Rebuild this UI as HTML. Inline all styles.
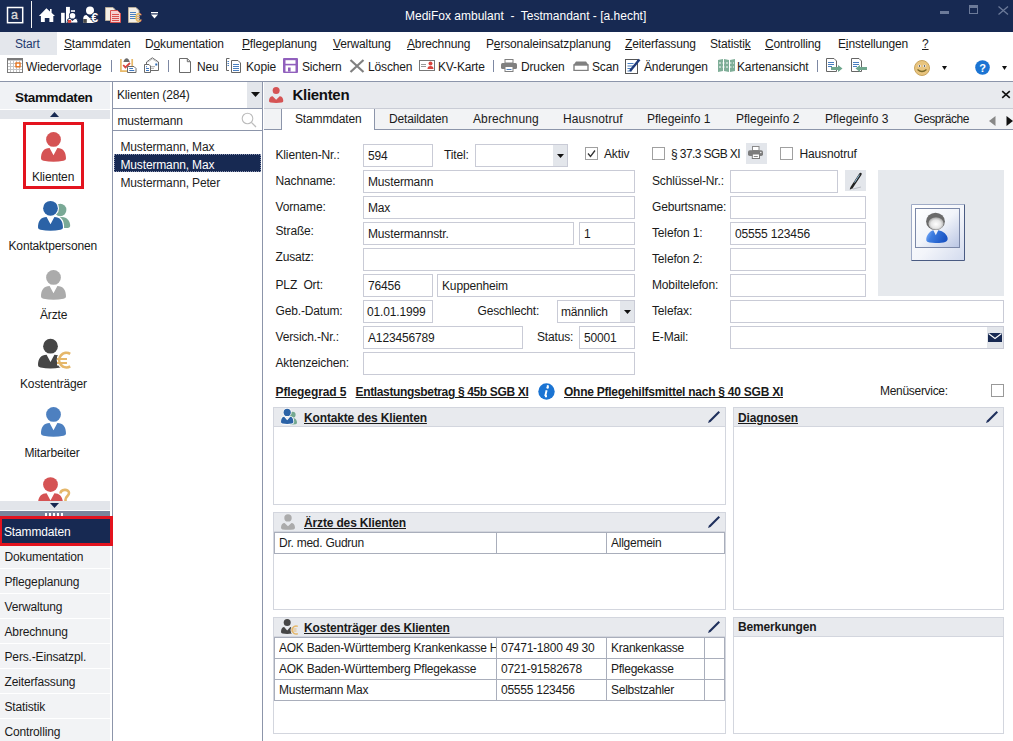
<!DOCTYPE html><html><head><meta charset="utf-8"><style>
html,body{margin:0;padding:0;}
body{width:1013px;height:741px;position:relative;overflow:hidden;background:#fff;font-family:"Liberation Sans",sans-serif;color:#1a1a1a;}
.t{position:absolute;white-space:pre;letter-spacing:-0.15px;}
.r{position:absolute;}
u{text-decoration:underline;text-underline-offset:1px;}
</style></head><body>
<div class="r" style="left:0px;top:0px;width:1013px;height:32px;background:#172952;"></div><svg class="r" style="left:6px;top:6px" width="18" height="18" viewBox="0 0 18 18"><rect x="1.5" y="1.5" width="15.2" height="15.2" fill="none" stroke="#fff" stroke-width="1.5"/><text x="5" y="12.7" font-size="12.5" font-family="Liberation Sans" fill="#dcdcdc" stroke="#dcdcdc" stroke-width="0.35">a</text></svg><div class="r" style="left:31px;top:1px;width:1.4px;height:27px;background:#f4f4f4;"></div><svg class="r" style="left:38px;top:7px" width="18" height="16" viewBox="0 0 18 16"><path d="M8.4 1.2 L12 4.4 V2 H13.6 V5.8 L17 9 H15.3 V15 H11.4 V11 H6.8 V15 H2.9 V9 H0.9 Z" fill="#fff"/></svg><svg class="r" style="left:60px;top:6px" width="18" height="17" viewBox="0 0 18 17"><rect x="1.1" y="6.8" width="3.6" height="10.1" fill="#fff"/><rect x="6" y="0.9" width="3.9" height="16" fill="#fff"/><rect x="10.9" y="4.2" width="4.1" height="1.6" fill="#fff"/><circle cx="12.5" cy="9.7" r="3.6" fill="#172952"/><circle cx="12.5" cy="9.7" r="2.8" fill="#fff"/><path d="M7.2 17 V15.5 Q7.2 12.3 10 12.3 L12.5 14.5 L15 12.3 Q17.8 12.3 17.8 15.5 V17 Z" fill="#fff" stroke="#172952" stroke-width="0.9"/><rect x="7.9" y="14" width="3.3" height="2.9" fill="#d9453e"/></svg><svg class="r" style="left:82px;top:6px" width="18" height="17" viewBox="0 0 18 17"><circle cx="8" cy="4.5" r="4" fill="#fff"/><path d="M1.2 17 V13 Q1.2 9.3 4.5 9.1 L8 12.3 L11.5 9.1 Q13 9.3 13.5 10.5 V17 Z" fill="#fff"/><rect x="1.2" y="13" width="3.6" height="3.9" fill="#4a4a4a"/><text x="9.3" y="16.3" font-size="12.5" font-weight="bold" font-family="Liberation Sans" fill="#fff" stroke="#172952" stroke-width="1.6" paint-order="stroke">€</text></svg><svg class="r" style="left:105px;top:7px" width="16" height="16" viewBox="0 0 16 16"><path d="M0.5 0.5 H8 L10 2.5 V13.5 H0.5 Z" fill="#f4efe6" stroke="#b9ad9a"/><path d="M5.5 3.5 H12.5 L15.5 6.5 V15.5 H5.5 Z" fill="#f6d0d0" stroke="#d9504e"/><rect x="7" y="7" width="7" height="1" fill="#d9504e"/><rect x="7" y="9" width="7" height="1" fill="#d9504e"/><rect x="7" y="11" width="7" height="1" fill="#d9504e"/><rect x="7" y="13" width="7" height="1" fill="#d9504e"/></svg><svg class="r" style="left:128px;top:7px" width="15" height="16" viewBox="0 0 15 16"><path d="M0.5 0.5 H8 L11 3.5 V15.5 H0.5 Z" fill="#f4efe6" stroke="#b9ad9a"/><rect x="2" y="5" width="6" height="1" fill="#4a7fc0"/><rect x="2" y="7" width="6" height="1" fill="#4a7fc0"/><rect x="2" y="9" width="6" height="1" fill="#4a7fc0"/><rect x="2" y="11" width="6" height="1" fill="#4a7fc0"/><text x="7" y="15" font-size="12" font-family="Liberation Sans" font-weight="bold" fill="#e1b56a">€</text></svg><svg class="r" style="left:151px;top:12px" width="7" height="7" viewBox="0 0 7 7"><rect x="0" y="0" width="7" height="1.3" fill="#fff"/><path d="M0 2.5 H7 L3.5 6.5 Z" fill="#fff"/></svg><div class="t" style="left:405px;top:9.34px;font-size:12px;line-height:14px;color:#fff;letter-spacing:0px;">MediFox ambulant  -  Testmandant - [a.hecht]</div><div class="r" style="left:940px;top:11px;width:9px;height:3px;background:#6c7a99;"></div><div class="r" style="left:969px;top:5px;width:9px;height:9px;border:1px solid #6c7a99;box-sizing:border-box;border-top-width:3px;"></div><svg class="r" style="left:998px;top:6px" width="11" height="9" viewBox="0 0 11 9"><path d="M0.5 0.5 L10 8.5 M10 0.5 L0.5 8.5" stroke="#6c7a99" stroke-width="1.3"/></svg><div class="r" style="left:0px;top:32px;width:57px;height:23px;background:#e4e7ec;"></div><div class="t" style="left:15px;top:36.84px;font-size:12px;line-height:14px;color:#1f3a6e;">Start</div><div class="t" style="left:64px;top:36.84px;font-size:12px;line-height:14px;"><u>S</u>tammdaten</div><div class="t" style="left:145px;top:36.84px;font-size:12px;line-height:14px;">D<u>o</u>kumentation</div><div class="t" style="left:242px;top:36.84px;font-size:12px;line-height:14px;"><u>P</u>flegeplanung</div><div class="t" style="left:333px;top:36.84px;font-size:12px;line-height:14px;"><u>V</u>erwaltung</div><div class="t" style="left:407px;top:36.84px;font-size:12px;line-height:14px;"><u>A</u>brechnung</div><div class="t" style="left:486px;top:36.84px;font-size:12px;line-height:14px;">P<u>e</u>rsonaleinsatzplanung</div><div class="t" style="left:625px;top:36.84px;font-size:12px;line-height:14px;"><u>Z</u>eiterfassung</div><div class="t" style="left:710px;top:36.84px;font-size:12px;line-height:14px;">Statisti<u>k</u></div><div class="t" style="left:765px;top:36.84px;font-size:12px;line-height:14px;"><u>C</u>ontrolling</div><div class="t" style="left:838px;top:36.84px;font-size:12px;line-height:14px;">E<u>i</u>nstellungen</div><div class="t" style="left:922px;top:36.84px;font-size:12px;line-height:14px;"><u>?</u></div><svg class="r" style="left:7px;top:58px" width="16" height="15" viewBox="0 0 16 15"><rect x="0.5" y="0.5" width="15" height="14" fill="#fff" stroke="#7a7a7a"/><rect x="0" y="0" width="16" height="2.4" fill="#7a7a7a"/><path d="M3.5 2.4 V14 M6.5 2.4 V14 M9.5 2.4 V14 M12.5 2.4 V14 M1 5.5 H15 M1 8.5 H15 M1 11.5 H15" stroke="#c4c4c4" stroke-width="1"/><rect x="9" y="5" width="4" height="3.8" fill="#fff" stroke="#e8731a" stroke-width="1.4"/></svg><div class="t" style="left:26px;top:59.84px;font-size:12px;line-height:14px;">Wiedervorlage</div><div class="r" style="left:111px;top:60px;width:1px;height:12px;background:#7d88a3;"></div><svg class="r" style="left:120px;top:57px" width="17" height="16" viewBox="0 0 17 16"><path d="M0.9 2 V14.1 H12.2 V2" fill="none" stroke="#e8b96a" stroke-width="1.7"/><path d="M3.3 5 L4.6 2.6 Q6.6 0 8.6 2.6 L9.9 5 Z" fill="#6b6b6b"/><path d="M3.2 8 L5.4 10.4 L10 6" fill="none" stroke="#d9453e" stroke-width="1.8"/><path d="M7.5 9.5 H14 L16 11.5 V15.5 H7.5 Z" fill="#fff" stroke="#6b6b6b"/><rect x="9.3" y="11" width="3.7" height="1" fill="#3f78c0"/><rect x="9.3" y="13" width="5" height="1" fill="#3f78c0"/></svg><svg class="r" style="left:144px;top:57px" width="16" height="16" viewBox="0 0 16 16"><path d="M2.5 5 L8.3 0.8 L14.5 5 V13.5 H2.5 Z" fill="#fff" stroke="#6b6b6b"/><path d="M3.5 5.3 L8.3 2 L13.5 5.3" fill="none" stroke="#c8c8c8"/><rect x="11.3" y="6.5" width="2" height="2" fill="#2f6cb5"/><path d="M7 9.6 H11 M7 11.3 H10" stroke="#b0b0b0"/><path d="M0.5 7.5 H5 L6.5 9 V15.5 H0.5 Z" fill="#fff" stroke="#6b6b6b"/><rect x="2" y="9.2" width="1" height="1" fill="#3f78c0"/><rect x="2" y="11" width="3" height="1" fill="#3f78c0"/><rect x="2" y="13" width="3" height="1" fill="#3f78c0"/></svg><div class="r" style="left:168px;top:60px;width:1px;height:12px;background:#7d88a3;"></div><svg class="r" style="left:179px;top:57px" width="12" height="16" viewBox="0 0 12 16"><path d="M0.5 1.5 H8.3 L11.5 4.7 V15.5 H0.5 Z" fill="#fff" stroke="#6b6b6b" stroke-linejoin="miter"/><path d="M8.3 1.5 V4.7 H11.5" fill="none" stroke="#6b6b6b"/></svg><div class="t" style="left:197px;top:59.84px;font-size:12px;line-height:14px;">Neu</div><svg class="r" style="left:226px;top:58px" width="16" height="15" viewBox="0 0 16 15"><path d="M3.5 0.5 H0.5 V12.5 H3" fill="none" stroke="#666"/><rect x="1.5" y="3" width="1.5" height="1" fill="#4a7fc0"/><rect x="1.5" y="5" width="1.5" height="1" fill="#4a7fc0"/><rect x="1.5" y="7" width="1.5" height="1" fill="#4a7fc0"/><path d="M5.5 2.5 H12 L14.5 5 V14.5 H5.5 Z" fill="#fff" stroke="#666"/><rect x="7" y="6" width="6" height="1" fill="#4a7fc0"/><rect x="7" y="8" width="6" height="1" fill="#4a7fc0"/><rect x="7" y="10" width="6" height="1" fill="#4a7fc0"/><rect x="7" y="12" width="6" height="1" fill="#4a7fc0"/></svg><div class="t" style="left:246px;top:59.84px;font-size:12px;line-height:14px;">Kopie</div><svg class="r" style="left:283px;top:58px" width="15" height="15" viewBox="0 0 15 15"><rect x="0" y="0" width="15" height="15" rx="1" fill="#9160bd"/><rect x="2.5" y="2.2" width="10" height="3.6" fill="#fff"/><rect x="2.5" y="7.4" width="10" height="6.2" fill="#fff"/><rect x="5" y="9.5" width="2.6" height="4.1" fill="#9160bd"/></svg><div class="t" style="left:302px;top:59.84px;font-size:12px;line-height:14px;">Sichern</div><svg class="r" style="left:349px;top:59px" width="16" height="14" viewBox="0 0 16 14"><path d="M1.5 1 L14.5 13 M14.5 1 L1.5 13" stroke="#808080" stroke-width="2.2"/></svg><div class="t" style="left:368px;top:59.84px;font-size:12px;line-height:14px;">Löschen</div><svg class="r" style="left:419px;top:60px" width="16" height="11" viewBox="0 0 16 11"><rect x="0.5" y="0.5" width="15" height="10" fill="#fff" stroke="#777"/><rect x="2" y="4" width="5" height="1" fill="#999"/><rect x="2" y="6" width="5" height="1" fill="#999"/><circle cx="11.5" cy="3.5" r="2" fill="#d9453e"/><path d="M8.5 9 Q8.5 6 11.5 6 Q14.5 6 14.5 9 Z" fill="#d9453e"/></svg><div class="t" style="left:438px;top:59.84px;font-size:12px;line-height:14px;">KV-Karte</div><div class="r" style="left:493px;top:60px;width:1px;height:12px;background:#7d88a3;"></div><svg class="r" style="left:501px;top:59px" width="16" height="13" viewBox="0 0 16 13"><rect x="4" y="0.5" width="8" height="3.5" fill="none" stroke="#808080"/><rect x="0" y="4" width="16" height="6" rx="1.5" fill="#808080"/><rect x="4" y="7.5" width="8" height="5" fill="#fff" stroke="#808080"/><rect x="5.5" y="10" width="5" height="1" fill="#4a7fc0"/></svg><div class="t" style="left:521px;top:59.84px;font-size:12px;line-height:14px;">Drucken</div><svg class="r" style="left:573px;top:61px" width="16" height="10" viewBox="0 0 16 10"><path d="M3 0.5 H13 L15.5 4 H0.5 Z" fill="#808080"/><rect x="1" y="4" width="14" height="5.5" fill="none" stroke="#808080" stroke-width="1.4"/></svg><div class="t" style="left:592px;top:59.84px;font-size:12px;line-height:14px;">Scan</div><svg class="r" style="left:625px;top:58px" width="16" height="16" viewBox="0 0 16 16"><rect x="0.5" y="1.5" width="12" height="14" fill="#fff" stroke="#555"/><rect x="2.5" y="5" width="6" height="1" fill="#4a7fc0"/><rect x="2.5" y="7.5" width="6" height="1" fill="#4a7fc0"/><rect x="2.5" y="10" width="5" height="1" fill="#4a7fc0"/><rect x="2.5" y="12.5" width="4" height="1" fill="#4a7fc0"/><path d="M5 13 L14.5 1.5" stroke="#1f3a7a" stroke-width="2.4"/></svg><div class="t" style="left:644px;top:59.84px;font-size:12px;line-height:14px;">Änderungen</div><svg class="r" style="left:718px;top:59px" width="17" height="13" viewBox="0 0 17 13"><path d="M0 1 L5 0 L5 12 L0 13 Z M6 0 L11 1 L11 13 L6 12 Z M12 1 L17 0 L17 12 L12 13 Z" fill="#7fae98"/><path d="M1 4 H16 M1 8 H16" stroke="#fff" stroke-width="1" stroke-dasharray="2 1.5"/></svg><div class="t" style="left:737px;top:59.84px;font-size:12px;line-height:14px;">Kartenansicht</div><div class="r" style="left:817px;top:60px;width:1px;height:12px;background:#7d88a3;"></div><svg class="r" style="left:826px;top:58px" width="17" height="14" viewBox="0 0 17 14"><path d="M0.5 0.5 H8 L10.5 3 V13.5 H0.5 Z" fill="#fff" stroke="#666"/><rect x="2" y="4" width="6" height="1" fill="#4a7fc0"/><rect x="2" y="6" width="6" height="1" fill="#4a7fc0"/><rect x="2" y="8" width="4" height="1" fill="#4a7fc0"/><path d="M5 9 H12 V7 L16.5 10.5 L12 14 V12 H5 Z" fill="#6fa78e"/></svg><svg class="r" style="left:851px;top:58px" width="16" height="14" viewBox="0 0 16 14"><path d="M0.5 0.5 H8 L10.5 3 V13.5 H0.5 Z" fill="#fff" stroke="#666"/><rect x="2" y="4" width="6" height="1" fill="#4a7fc0"/><rect x="2" y="6" width="6" height="1" fill="#4a7fc0"/><rect x="2" y="8" width="4" height="1" fill="#4a7fc0"/><path d="M16 9 H9 V7 L4.5 10.5 L9 14 V12 H16 Z" fill="#6fa78e"/></svg><svg class="r" style="left:914px;top:60px" width="16" height="16" viewBox="0 0 16 16"><circle cx="8" cy="8" r="7.5" fill="#e8c47e" stroke="#c9a45e"/><ellipse cx="5.5" cy="6" rx="1.6" ry="1.3" fill="#fff"/><ellipse cx="10.5" cy="6" rx="1.6" ry="1.3" fill="#fff"/><circle cx="5.5" cy="6" r="0.8" fill="#222"/><circle cx="10.5" cy="6" r="0.8" fill="#222"/><path d="M3.5 9.5 Q8 13.5 12.5 9.5" fill="none" stroke="#7a6a2a" stroke-width="1.2"/></svg><svg class="r" style="left:942px;top:66px" width="5" height="4" viewBox="0 0 5 4"><path d="M0 0 H5 L2.5 4 Z" fill="#111"/></svg><svg class="r" style="left:975px;top:60px" width="15" height="15" viewBox="0 0 15 15"><circle cx="7.5" cy="7.5" r="7.3" fill="#1b74d3"/><text x="7.5" y="11.5" text-anchor="middle" font-size="11" font-weight="bold" font-family="Liberation Sans" fill="#fff">?</text></svg><svg class="r" style="left:1002px;top:66px" width="5" height="4" viewBox="0 0 5 4"><path d="M0 0 H5 L2.5 4 Z" fill="#111"/></svg><div class="r" style="left:0px;top:81px;width:1013px;height:1px;background:#8c95aa;"></div><div class="r" style="left:0px;top:82px;width:110px;height:27px;background:#f0f2f5;"></div><div class="t" style="left:15px;top:90.32px;font-size:13.5px;line-height:16px;font-weight:bold;color:#111;letter-spacing:-0.35px;">Stammdaten</div><div class="r" style="left:0px;top:110px;width:110px;height:9px;background:#e2e5ea;"></div><svg class="r" style="left:50px;top:112px" width="9" height="5" viewBox="0 0 9 5"><path d="M0 5 L4.5 0 L9 5 Z" fill="#172952"/></svg><div class="r" style="left:112px;top:82px;width:1px;height:659px;background:#8c95aa;"></div><div class="r" style="left:23px;top:122px;width:61px;height:67px;border:3px solid #e3131e;box-sizing:border-box;"></div><svg class="r" style="left:41px;top:132px" width="26" height="31" viewBox="0 0 26 31"><circle cx="12.50" cy="7.40" r="7.40" fill="#d55354"/><path d="M0.00 26.50 C0.00 20.00 3.00 16.00 8.60 16.00 L12.50 23.30 L16.40 16.00 C22.00 16.00 25.00 20.00 25.00 26.50 Q25.00 28.30 22.50 28.80 Q12.50 30.80 2.50 28.80 Q0.00 28.30 0.00 26.50 Z" fill="#d55354"/></svg><div class="t" style="left:32px;top:169.84px;font-size:12px;line-height:14px;color:#1a1a1a;">Klienten</div><svg class="r" style="left:36px;top:199px" width="36" height="34" viewBox="0 0 36 34"><circle cx="24.2" cy="11" r="6.2" fill="#7aa996"/><path d="M17 29 C17 22 19 18 26 18 C31 18 34.2 22 34.2 27 Q34.2 28.5 32 29 Z" fill="#7aa996"/><circle cx="14.50" cy="9.30" r="7.40" fill="#fff" stroke="#fff" stroke-width="2.2"/><path d="M2.00 28.40 C2.00 21.90 5.00 17.90 10.60 17.90 L14.50 25.20 L18.40 17.90 C24.00 17.90 27.00 21.90 27.00 28.40 Q27.00 30.20 24.50 30.70 Q14.50 32.70 4.50 30.70 Q2.00 30.20 2.00 28.40 Z" fill="#fff" stroke="#fff" stroke-width="2.2"/><circle cx="14.50" cy="9.30" r="7.40" fill="#2b62a6"/><path d="M2.00 28.40 C2.00 21.90 5.00 17.90 10.60 17.90 L14.50 25.20 L18.40 17.90 C24.00 17.90 27.00 21.90 27.00 28.40 Q27.00 30.20 24.50 30.70 Q14.50 32.70 4.50 30.70 Q2.00 30.20 2.00 28.40 Z" fill="#2b62a6"/></svg><div class="t" style="left:8.5px;top:238.84px;font-size:12px;line-height:14px;">Kontaktpersonen</div><svg class="r" style="left:41px;top:270px" width="26" height="31" viewBox="0 0 26 31"><circle cx="12.50" cy="7.40" r="7.40" fill="#ababab"/><path d="M0.00 26.50 C0.00 20.00 3.00 16.00 8.60 16.00 L12.50 23.30 L16.40 16.00 C22.00 16.00 25.00 20.00 25.00 26.50 Q25.00 28.30 22.50 28.80 Q12.50 30.80 2.50 28.80 Q0.00 28.30 0.00 26.50 Z" fill="#ababab"/></svg><div class="t" style="left:40px;top:307.84px;font-size:12px;line-height:14px;">Ärzte</div><svg class="r" style="left:36px;top:336px" width="40" height="34" viewBox="0 0 40 34"><circle cx="14.50" cy="10.20" r="7.40" fill="#464646"/><path d="M2.00 29.30 C2.00 22.80 5.00 18.80 10.60 18.80 L14.50 26.10 L18.40 18.80 C24.00 18.80 27.00 22.80 27.00 29.30 Q27.00 31.10 24.50 31.60 Q14.50 33.60 4.50 31.60 Q2.00 31.10 2.00 29.30 Z" fill="#464646"/><path d="M34.2 17.8 A7.3 7.3 0 1 0 34.2 30.4" fill="none" stroke="#fff" stroke-width="5"/><path d="M21 23 H31 M21 27 H31" stroke="#fff" stroke-width="5"/><path d="M34.2 17.8 A7.3 7.3 0 1 0 34.2 30.4" fill="none" stroke="#e5b76a" stroke-width="2.6"/><path d="M21 23 H31 M21 27 H31" stroke="#e5b76a" stroke-width="1.8"/></svg><div class="t" style="left:20px;top:376.84px;font-size:12px;line-height:14px;">Kostenträger</div><svg class="r" style="left:41px;top:407px" width="26" height="31" viewBox="0 0 26 31"><circle cx="12.50" cy="7.40" r="7.40" fill="#4d80c0"/><path d="M0.00 26.50 C0.00 20.00 3.00 16.00 8.60 16.00 L12.50 23.30 L16.40 16.00 C22.00 16.00 25.00 20.00 25.00 26.50 Q25.00 28.30 22.50 28.80 Q12.50 30.80 2.50 28.80 Q0.00 28.30 0.00 26.50 Z" fill="#4d80c0"/></svg><div class="t" style="left:24.5px;top:445.84px;font-size:12px;line-height:14px;">Mitarbeiter</div><div class="r" style="left:36px;top:470px;width:40px;height:31px;overflow:hidden"><svg class="r" style="left:0px;top:0px" width="40" height="40" viewBox="0 0 40 40"><circle cx="14.50" cy="14.60" r="7.40" fill="#d55354"/><path d="M2.00 33.70 C2.00 27.20 5.00 23.20 10.60 23.20 L14.50 30.50 L18.40 23.20 C24.00 23.20 27.00 27.20 27.00 33.70 Q27.00 35.50 24.50 36.00 Q14.50 38.00 4.50 36.00 Q2.00 35.50 2.00 33.70 Z" fill="#d55354"/><path d="M24.5 23.5 C24.5 19 33 18.5 33 23 C33 26 29.5 26.5 29.5 29.5 V31" fill="none" stroke="#fff" stroke-width="5"/><path d="M24.5 23.5 C24.5 19 33 18.5 33 23 C33 26 29.5 26.5 29.5 29.5 V31" fill="none" stroke="#e5b76a" stroke-width="2.6"/></svg></div><div class="r" style="left:0px;top:501px;width:110px;height:9px;background:#e2e5ea;"></div><svg class="r" style="left:50px;top:503px" width="9" height="5" viewBox="0 0 9 5"><path d="M0 0 L9 0 L4.5 5 Z" fill="#172952"/></svg><div class="r" style="left:0px;top:511px;width:110px;height:5px;background:#7b859b;"></div><div class="r" style="left:45px;top:513px;width:2px;height:3px;background:#fff;"></div><div class="r" style="left:49px;top:513px;width:2px;height:3px;background:#fff;"></div><div class="r" style="left:53px;top:513px;width:2px;height:3px;background:#fff;"></div><div class="r" style="left:57px;top:513px;width:2px;height:3px;background:#fff;"></div><div class="r" style="left:61px;top:513px;width:2px;height:3px;background:#fff;"></div><div class="r" style="left:0px;top:546px;width:110px;height:195px;background:#f2f3f5;"></div><div class="r" style="left:0px;top:568px;width:110px;height:1px;background:#fff;"></div><div class="r" style="left:0px;top:593px;width:110px;height:1px;background:#fff;"></div><div class="r" style="left:0px;top:618px;width:110px;height:1px;background:#fff;"></div><div class="r" style="left:0px;top:643px;width:110px;height:1px;background:#fff;"></div><div class="r" style="left:0px;top:668px;width:110px;height:1px;background:#fff;"></div><div class="r" style="left:0px;top:693px;width:110px;height:1px;background:#fff;"></div><div class="r" style="left:0px;top:718px;width:110px;height:1px;background:#fff;"></div><div class="r" style="left:0px;top:743px;width:110px;height:1px;background:#fff;"></div><div class="t" style="left:4.5px;top:549.84px;font-size:12px;line-height:14px;">Dokumentation</div><div class="t" style="left:4.5px;top:574.84px;font-size:12px;line-height:14px;">Pflegeplanung</div><div class="t" style="left:4.5px;top:599.84px;font-size:12px;line-height:14px;">Verwaltung</div><div class="t" style="left:4.5px;top:624.84px;font-size:12px;line-height:14px;">Abrechnung</div><div class="t" style="left:4.5px;top:649.84px;font-size:12px;line-height:14px;">Pers.-Einsatzpl.</div><div class="t" style="left:4.5px;top:674.84px;font-size:12px;line-height:14px;">Zeiterfassung</div><div class="t" style="left:4.5px;top:699.84px;font-size:12px;line-height:14px;">Statistik</div><div class="t" style="left:4.5px;top:724.84px;font-size:12px;line-height:14px;">Controlling</div><div class="r" style="left:0px;top:516px;width:113px;height:30px;background:#e3131e;"></div><div class="r" style="left:2px;top:519px;width:108px;height:24px;background:#172952;"></div><div class="t" style="left:4px;top:524.84px;font-size:12px;line-height:14px;color:#fff;">Stammdaten</div><div class="r" style="left:113px;top:82px;width:149px;height:26px;background:#fff;"></div><div class="t" style="left:117px;top:87.84px;font-size:12px;line-height:14px;">Klienten (284)</div><div class="r" style="left:247px;top:82px;width:15px;height:26px;background:#e3e6eb;"></div><svg class="r" style="left:251px;top:92px" width="9" height="5" viewBox="0 0 9 5"><path d="M0 0 H9 L4.5 5 Z" fill="#111"/></svg><div class="r" style="left:113px;top:108px;width:149px;height:1px;background:#8c95aa;"></div><div class="t" style="left:117.5px;top:113.84px;font-size:12px;line-height:14px;">mustermann</div><svg class="r" style="left:241px;top:112px" width="16" height="16" viewBox="0 0 16 16"><circle cx="6.5" cy="6.5" r="5.3" fill="none" stroke="#bdbdbd" stroke-width="1.1"/><path d="M10.4 10.4 L15 15" stroke="#bdbdbd" stroke-width="1.3"/></svg><div class="r" style="left:113px;top:130px;width:149px;height:1px;background:#8c95aa;"></div><div class="r" style="left:262px;top:82px;width:1px;height:659px;background:#8c95aa;"></div><div class="t" style="left:120.5px;top:140.34px;font-size:12px;line-height:14px;color:#1e1e1e;">Mustermann, Max</div><div class="r" style="left:114px;top:154px;width:147px;height:18px;background:#172952;outline:1px dotted #8a93b0;outline-offset:-1px;"></div><div class="t" style="left:120.5px;top:158.34px;font-size:12px;line-height:14px;color:#fff;">Mustermann, Max</div><div class="t" style="left:120.5px;top:176.34px;font-size:12px;line-height:14px;color:#1e1e1e;">Mustermann, Peter</div><div class="r" style="left:264px;top:82px;width:749px;height:26px;background:#e8eaee;"></div><svg class="r" style="left:269px;top:87px" width="15" height="17" viewBox="0 0 15 17"><circle cx="7.15" cy="3.50" r="3.50" fill="#d55354" /><path d="M0 14.00 C0 11.10 1.5 9.30 3.61 9.30 L7.15 12.70 L10.69 9.30 C12.80 9.30 14.30 11.10 14.30 14.00 Q14.30 15.30 12.80 15.60 Q7.15 16.40 1.5 15.60 Q0 15.30 0 14.00 Z" fill="#d55354" /></svg><div class="t" style="left:292.5px;top:86.30px;font-size:15px;line-height:17px;font-weight:bold;color:#111;letter-spacing:-0.3px;">Klienten</div><svg class="r" style="left:1001px;top:90px" width="10" height="9" viewBox="0 0 10 9"><path d="M1.2 1.2 L8.8 7.8 M8.8 1.2 L1.2 7.8" stroke="#111" stroke-width="1.6"/></svg><div class="r" style="left:264px;top:108px;width:749px;height:1px;background:#c9ccd5;"></div><div class="r" style="left:264px;top:109px;width:749px;height:20px;background:#f2f3f5;"></div><div class="r" style="left:264px;top:129px;width:749px;height:1px;background:#8c95aa;"></div><div class="r" style="left:281px;top:109px;width:1px;height:21px;background:#8c95aa;"></div><div class="r" style="left:282px;top:109px;width:92px;height:21px;background:#fff;"></div><div class="r" style="left:374px;top:109px;width:1px;height:21px;background:#8c95aa;"></div><div class="t" style="left:295px;top:111.84px;font-size:12px;line-height:14px;letter-spacing:-0.15px;">Stammdaten</div><div class="t" style="left:389px;top:111.84px;font-size:12px;line-height:14px;letter-spacing:-0.15px;">Detaildaten</div><div class="t" style="left:473px;top:111.84px;font-size:12px;line-height:14px;letter-spacing:0.1px;">Abrechnung</div><div class="t" style="left:563px;top:111.84px;font-size:12px;line-height:14px;letter-spacing:0.1px;">Hausnotruf</div><div class="t" style="left:647px;top:111.84px;font-size:12px;line-height:14px;letter-spacing:0px;">Pflegeinfo 1</div><div class="t" style="left:736px;top:111.84px;font-size:12px;line-height:14px;letter-spacing:0px;">Pflegeinfo 2</div><div class="t" style="left:825px;top:111.84px;font-size:12px;line-height:14px;letter-spacing:0px;">Pflegeinfo 3</div><div class="t" style="left:914px;top:111.84px;font-size:12px;line-height:14px;letter-spacing:-0.4px;">Gespräche</div><svg class="r" style="left:989px;top:116px" width="7" height="10" viewBox="0 0 7 10"><path d="M6.5 0 V10 L0 5 Z" fill="#888"/></svg><svg class="r" style="left:1006px;top:116px" width="7" height="10" viewBox="0 0 7 10"><path d="M0.5 0 V10 L7 5 Z" fill="#111"/></svg><div class="r" style="left:264px;top:130px;width:749px;height:611px;background:#fff;"></div><div class="t" style="left:275.5px;top:147.84px;font-size:12px;line-height:14px;">Klienten-Nr.:</div><div class="r" style="left:363px;top:144px;width:70px;height:23px;background:#fff;border:1px solid #c9cbd6;box-sizing:border-box;"></div><div class="t" style="left:368px;top:148.84px;font-size:12px;line-height:14px;">594</div><div class="t" style="left:444px;top:147.84px;font-size:12px;line-height:14px;">Titel:</div><div class="r" style="left:475px;top:144px;width:93px;height:23px;background:#fff;border:1px solid #c9cbd6;box-sizing:border-box;"></div><div class="r" style="left:553px;top:145px;width:14px;height:21px;background:#e3e6eb;"></div><svg class="r" style="left:557px;top:154px" width="7" height="4" viewBox="0 0 7 4"><path d="M0 0 H7 L3.5 4 Z" fill="#111"/></svg><div class="r" style="left:585px;top:147px;width:13px;height:13px;background:#fff;border:1px solid #a0a0a0;box-sizing:border-box;"></div><svg class="r" style="left:587px;top:149px" width="9" height="9" viewBox="0 0 9 9"><path d="M1 4.5 L3.5 7.5 L8 1.5" fill="none" stroke="#333" stroke-width="1.3"/></svg><div class="t" style="left:604px;top:147.34px;font-size:12px;line-height:14px;">Aktiv</div><div class="t" style="left:275.5px;top:173.84px;font-size:12px;line-height:14px;">Nachname:</div><div class="r" style="left:363px;top:170px;width:272px;height:23px;background:#fff;border:1px solid #c9cbd6;box-sizing:border-box;"></div><div class="t" style="left:368px;top:174.84px;font-size:12px;line-height:14px;">Mustermann</div><div class="t" style="left:275.5px;top:199.84px;font-size:12px;line-height:14px;">Vorname:</div><div class="r" style="left:363px;top:196px;width:272px;height:23px;background:#fff;border:1px solid #c9cbd6;box-sizing:border-box;"></div><div class="t" style="left:368px;top:200.84px;font-size:12px;line-height:14px;">Max</div><div class="t" style="left:275.5px;top:223.84px;font-size:12px;line-height:14px;">Straße:</div><div class="r" style="left:363px;top:222px;width:211px;height:23px;background:#fff;border:1px solid #c9cbd6;box-sizing:border-box;"></div><div class="t" style="left:368px;top:226.84px;font-size:12px;line-height:14px;">Mustermannstr.</div><div class="r" style="left:579px;top:222px;width:56px;height:23px;background:#fff;border:1px solid #c9cbd6;box-sizing:border-box;"></div><div class="t" style="left:584px;top:226.84px;font-size:12px;line-height:14px;">1</div><div class="t" style="left:275.5px;top:249.84px;font-size:12px;line-height:14px;">Zusatz:</div><div class="r" style="left:363px;top:248px;width:272px;height:23px;background:#fff;border:1px solid #c9cbd6;box-sizing:border-box;"></div><div class="t" style="left:275.5px;top:277.84px;font-size:12px;line-height:14px;">PLZ  Ort:</div><div class="r" style="left:363px;top:274px;width:70px;height:23px;background:#fff;border:1px solid #c9cbd6;box-sizing:border-box;"></div><div class="t" style="left:368px;top:278.84px;font-size:12px;line-height:14px;">76456</div><div class="r" style="left:437px;top:274px;width:198px;height:23px;background:#fff;border:1px solid #c9cbd6;box-sizing:border-box;"></div><div class="t" style="left:442px;top:278.84px;font-size:12px;line-height:14px;">Kuppenheim</div><div class="t" style="left:275.5px;top:303.84px;font-size:12px;line-height:14px;">Geb.-Datum:</div><div class="r" style="left:363px;top:300px;width:70px;height:23px;background:#fff;border:1px solid #c9cbd6;box-sizing:border-box;"></div><div class="t" style="left:367px;top:304.84px;font-size:12px;line-height:14px;">01.01.1999</div><div class="t" style="left:477.5px;top:304.34px;font-size:12px;line-height:14px;">Geschlecht:</div><div class="r" style="left:557px;top:300px;width:78px;height:23px;background:#fff;border:1px solid #c9cbd6;box-sizing:border-box;"></div><div class="t" style="left:561px;top:304.84px;font-size:12px;line-height:14px;">männlich</div><div class="r" style="left:620px;top:301px;width:14px;height:21px;background:#e3e6eb;"></div><svg class="r" style="left:624px;top:310px" width="7" height="4" viewBox="0 0 7 4"><path d="M0 0 H7 L3.5 4 Z" fill="#111"/></svg><div class="t" style="left:275.5px;top:329.84px;font-size:12px;line-height:14px;">Versich.-Nr.:</div><div class="r" style="left:363px;top:326px;width:160px;height:23px;background:#fff;border:1px solid #c9cbd6;box-sizing:border-box;"></div><div class="t" style="left:368px;top:330.84px;font-size:12px;line-height:14px;">A123456789</div><div class="t" style="left:537px;top:330.34px;font-size:12px;line-height:14px;">Status:</div><div class="r" style="left:579px;top:326px;width:56px;height:23px;background:#fff;border:1px solid #c9cbd6;box-sizing:border-box;"></div><div class="t" style="left:584px;top:330.84px;font-size:12px;line-height:14px;">50001</div><div class="t" style="left:275.5px;top:355.84px;font-size:12px;line-height:14px;">Aktenzeichen:</div><div class="r" style="left:363px;top:352px;width:272px;height:23px;background:#fff;border:1px solid #c9cbd6;box-sizing:border-box;"></div><div class="r" style="left:652px;top:147px;width:13px;height:13px;background:#fff;border:1px solid #a0a0a0;box-sizing:border-box;"></div><div class="t" style="left:671px;top:147.34px;font-size:12px;line-height:14px;letter-spacing:-0.6px;">§ 37.3 SGB XI</div><div class="r" style="left:746px;top:143px;width:21px;height:21px;background:#e3e6eb;"></div><svg class="r" style="left:747px;top:146px" width="17" height="13" viewBox="0 0 17 13"><rect x="5.5" y="0.5" width="6.5" height="4" fill="#fff" stroke="#8a8a8a"/><rect x="1" y="4.3" width="15" height="5.7" rx="1.8" fill="#7d7d7d"/><rect x="5.3" y="8" width="7.2" height="4.5" fill="#fff" stroke="#7d7d7d"/><rect x="6.8" y="10" width="4" height="1" fill="#8a8a8a"/><circle cx="13.8" cy="6.5" r="0.7" fill="#fff"/></svg><div class="r" style="left:780px;top:147px;width:13px;height:13px;background:#fff;border:1px solid #a0a0a0;box-sizing:border-box;"></div><div class="t" style="left:799.5px;top:147.34px;font-size:12px;line-height:14px;">Hausnotruf</div><div class="t" style="left:652px;top:173.84px;font-size:12px;line-height:14px;">Schlüssel-Nr.:</div><div class="r" style="left:730px;top:170px;width:108px;height:23px;background:#fff;border:1px solid #c9cbd6;box-sizing:border-box;"></div><div class="r" style="left:845px;top:170px;width:21px;height:21px;background:#e3e6eb;"></div><svg class="r" style="left:848px;top:171px" width="16" height="19" viewBox="0 0 16 19"><path d="M2.2 16.5 L11.3 2.6 Q12.3 1.3 13.3 2 Q14.2 2.7 13.4 3.9 L4.3 17.7 Z" fill="#222"/><path d="M11.6 3.6 L6.5 11.5" stroke="#9fd2f0" stroke-width="0.9"/><path d="M2.2 16.5 L1.8 18.5 L4.3 17.7" fill="#222"/><path d="M5 18 L13 16" stroke="#b9bcc4" stroke-width="1"/></svg><div class="t" style="left:652px;top:199.84px;font-size:12px;line-height:14px;">Geburtsname:</div><div class="r" style="left:730px;top:196px;width:136px;height:23px;background:#fff;border:1px solid #c9cbd6;box-sizing:border-box;"></div><div class="t" style="left:652px;top:225.84px;font-size:12px;line-height:14px;">Telefon 1:</div><div class="r" style="left:730px;top:222px;width:136px;height:23px;background:#fff;border:1px solid #c9cbd6;box-sizing:border-box;"></div><div class="t" style="left:735px;top:226.84px;font-size:12px;line-height:14px;">05555 123456</div><div class="t" style="left:652px;top:251.84px;font-size:12px;line-height:14px;">Telefon 2:</div><div class="r" style="left:730px;top:248px;width:136px;height:23px;background:#fff;border:1px solid #c9cbd6;box-sizing:border-box;"></div><div class="t" style="left:652px;top:277.84px;font-size:12px;line-height:14px;">Mobiltelefon:</div><div class="r" style="left:730px;top:274px;width:136px;height:23px;background:#fff;border:1px solid #c9cbd6;box-sizing:border-box;"></div><div class="t" style="left:652px;top:303.84px;font-size:12px;line-height:14px;">Telefax:</div><div class="r" style="left:730px;top:300px;width:274px;height:23px;background:#fff;border:1px solid #c9cbd6;box-sizing:border-box;"></div><div class="t" style="left:652px;top:329.84px;font-size:12px;line-height:14px;">E-Mail:</div><div class="r" style="left:730px;top:326px;width:274px;height:23px;background:#fff;border:1px solid #c9cbd6;box-sizing:border-box;"></div><div class="r" style="left:987px;top:327px;width:16px;height:21px;background:#e3e6eb;"></div><svg class="r" style="left:988px;top:333px" width="14" height="9" viewBox="0 0 14 9"><rect x="0" y="0" width="14" height="9" fill="#172952"/><path d="M0.5 0.5 L7 5.5 L13.5 0.5" fill="none" stroke="#fff" stroke-width="1.1"/></svg><div class="r" style="left:878px;top:170px;width:126px;height:126px;background:#e6e9ed;"></div><svg class="r" style="left:911px;top:204px" width="55" height="58" viewBox="0 0 55 58"><defs><linearGradient id="go" x1="0" y1="0" x2="1" y2="1"><stop offset="0" stop-color="#ffffff"/><stop offset="0.55" stop-color="#f3f5fa"/><stop offset="1" stop-color="#d3dbee"/></linearGradient><linearGradient id="gi" x1="0" y1="0" x2="1" y2="1"><stop offset="0" stop-color="#ffffff"/><stop offset="0.5" stop-color="#f1f4fa"/><stop offset="1" stop-color="#b9c5e3"/></linearGradient><radialGradient id="gh" cx="0.5" cy="0.55" r="0.6"><stop offset="0" stop-color="#ffffff"/><stop offset="0.55" stop-color="#e6e6e6"/><stop offset="0.85" stop-color="#b0b0b0"/><stop offset="1" stop-color="#8a8a8a"/></radialGradient><linearGradient id="gb" x1="0" y1="0" x2="1" y2="0.3"><stop offset="0" stop-color="#8cb8ff"/><stop offset="0.35" stop-color="#3d7de0"/><stop offset="1" stop-color="#1b55c4"/></linearGradient></defs><rect x="0.5" y="0.5" width="53" height="56" fill="url(#go)"/><path d="M0.5 56.5 V0.5 H53.5" fill="none" stroke="#9fabc6"/><path d="M53.5 0.5 V56.5 H0.5" fill="none" stroke="#4a5b82"/><rect x="4.5" y="4.5" width="44" height="39" fill="url(#gi)" stroke="#7b88a8"/><path d="M15.3 36.5 C14.8 32 18.5 27.2 22.3 26.3 L24.8 31.3 L27.3 26.3 C32 27 36.9 31 36.7 35 Q36.4 38 32.5 38.4 Q24.5 39.4 18.5 38.6 Q15.6 38.2 15.3 36.5 Z" fill="url(#gb)"/><ellipse cx="24.5" cy="17.4" rx="9.4" ry="8.6" fill="#6a6a6a"/><ellipse cx="25" cy="19.5" rx="7.6" ry="6.2" fill="url(#gh)"/></svg><div class="t" style="left:275.5px;top:385.34px;font-size:12px;line-height:14px;font-weight:bold;letter-spacing:-0.1px;"><u>Pflegegrad 5</u></div><div class="t" style="left:355.5px;top:385.34px;font-size:12px;line-height:14px;font-weight:bold;letter-spacing:-0.35px;"><u>Entlastungsbetrag § 45b SGB XI</u></div><svg class="r" style="left:538px;top:383px" width="17" height="17" viewBox="0 0 17 17"><circle cx="8.5" cy="8.5" r="8.2" fill="#1b74d3"/><path d="M9.8 4.2 a1.1 1.1 0 1 1 0.01 0 Z" fill="#fff"/><circle cx="9.6" cy="4.6" r="1.2" fill="#fff"/><path d="M8.6 7.3 L7.2 13.2 M7 13.2 H9" stroke="#fff" stroke-width="1.9" fill="none"/></svg><div class="t" style="left:564px;top:385.34px;font-size:12px;line-height:14px;font-weight:bold;letter-spacing:-0.25px;"><u>Ohne Pflegehilfsmittel nach § 40 SGB XI</u></div><div class="t" style="left:880px;top:383.84px;font-size:12px;line-height:14px;letter-spacing:-0.3px;">Menüservice:</div><div class="r" style="left:991px;top:384px;width:13px;height:13px;background:#fff;border:1px solid #999;box-sizing:border-box;"></div><div class="r" style="left:273px;top:407px;width:453px;height:98px;background:#fff;border:1px solid #d3d6de;box-sizing:border-box;"></div><div class="r" style="left:274px;top:408px;width:451px;height:19px;background:#e8eaee;"></div><div class="r" style="left:274px;top:426px;width:451px;height:1px;background:#d3d6de;"></div><div class="t" style="left:304px;top:411.34px;font-size:12px;line-height:14px;font-weight:bold;letter-spacing:-0.15px;"><u>Kontakte des Klienten</u></div><svg class="r" style="left:281px;top:408px" width="20" height="18" viewBox="0 0 20 18"><g transform="translate(0 0.8)"><circle cx="11.6" cy="5.9" r="3" fill="#74a890"/><path d="M9 16 C9 11 10.5 9.2 12.5 9.2 C14.5 9.2 16 11.5 16 14 Q16 15 14.5 15.5 Z" fill="#74a890"/><circle cx="6.20" cy="3.60" r="3.60" fill="#fff" stroke="#fff" stroke-width="1.6"/><path d="M0 13.20 C0 9.80 1.5 8.00 3.13 8.00 L6.20 11.40 L9.27 8.00 C10.90 8.00 12.40 9.80 12.40 13.20 Q12.40 14.50 10.90 14.80 Q6.20 15.60 1.5 14.80 Q0 14.50 0 13.20 Z" fill="#fff" stroke="#fff" stroke-width="1.6"/><circle cx="6.20" cy="3.60" r="3.60" fill="#2b62a6" /><path d="M0 13.20 C0 9.80 1.5 8.00 3.13 8.00 L6.20 11.40 L9.27 8.00 C10.90 8.00 12.40 9.80 12.40 13.20 Q12.40 14.50 10.90 14.80 Q6.20 15.60 1.5 14.80 Q0 14.50 0 13.20 Z" fill="#2b62a6" /></g></svg><svg class="r" style="left:707px;top:410px" width="14" height="14" viewBox="0 0 14 14"><path d="M1 13 L2 10.5 L10.5 2 L12 3.5 L3.5 12 Z" fill="#1e2f5c"/><path d="M10.3 2.2 L11.5 1 L13 2.5 L11.8 3.7 Z" fill="#1e2f5c"/></svg><div class="r" style="left:273px;top:512px;width:453px;height:98px;background:#fff;border:1px solid #d3d6de;box-sizing:border-box;"></div><div class="r" style="left:274px;top:513px;width:451px;height:19px;background:#e8eaee;"></div><div class="r" style="left:274px;top:531px;width:451px;height:1px;background:#d3d6de;"></div><div class="t" style="left:304px;top:516.34px;font-size:12px;line-height:14px;font-weight:bold;letter-spacing:-0.15px;"><u>Ärzte des Klienten</u></div><svg class="r" style="left:281px;top:513px" width="20" height="18" viewBox="0 0 20 18"><g transform="translate(0 1.2)"><circle cx="7.00" cy="3.70" r="3.70" fill="#ababab" /><path d="M0 13.60 C0 10.50 1.5 8.70 3.54 8.70 L7.00 12.10 L10.46 8.70 C12.50 8.70 14.00 10.50 14.00 13.60 Q14.00 14.90 12.50 15.20 Q7.00 16.00 1.5 15.20 Q0 14.90 0 13.60 Z" fill="#ababab" /></g></svg><svg class="r" style="left:707px;top:515px" width="14" height="14" viewBox="0 0 14 14"><path d="M1 13 L2 10.5 L10.5 2 L12 3.5 L3.5 12 Z" fill="#1e2f5c"/><path d="M10.3 2.2 L11.5 1 L13 2.5 L11.8 3.7 Z" fill="#1e2f5c"/></svg><div class="r" style="left:273px;top:617px;width:453px;height:117px;background:#fff;border:1px solid #d3d6de;box-sizing:border-box;"></div><div class="r" style="left:274px;top:618px;width:451px;height:19px;background:#e8eaee;"></div><div class="r" style="left:274px;top:636px;width:451px;height:1px;background:#d3d6de;"></div><div class="t" style="left:304px;top:621.34px;font-size:12px;line-height:14px;font-weight:bold;letter-spacing:-0.15px;"><u>Kostenträger des Klienten</u></div><svg class="r" style="left:281px;top:618px" width="20" height="18" viewBox="0 0 20 18"><g transform="translate(0 1)"><circle cx="6.20" cy="3.50" r="3.50" fill="#464646" /><path d="M0 13.00 C0 9.80 1.5 8.00 3.13 8.00 L6.20 11.40 L9.27 8.00 C10.90 8.00 12.40 9.80 12.40 13.00 Q12.40 14.30 10.90 14.60 Q6.20 15.40 1.5 14.60 Q0 14.30 0 13.00 Z" fill="#464646" /></g><path d="M16.8 8.4 A4 4 0 1 0 16.8 15.6" fill="none" stroke="#e8eaee" stroke-width="3.2"/><path d="M10.3 11 H15.5 M10.3 13 H15.5" stroke="#e8eaee" stroke-width="3.2"/><path d="M16.8 8.4 A4 4 0 1 0 16.8 15.6" fill="none" stroke="#e5b76a" stroke-width="1.4"/><path d="M10.3 11 H15.5 M10.3 13 H15.5" stroke="#e5b76a" stroke-width="0.9"/></svg><svg class="r" style="left:707px;top:620px" width="14" height="14" viewBox="0 0 14 14"><path d="M1 13 L2 10.5 L10.5 2 L12 3.5 L3.5 12 Z" fill="#1e2f5c"/><path d="M10.3 2.2 L11.5 1 L13 2.5 L11.8 3.7 Z" fill="#1e2f5c"/></svg><div class="r" style="left:733px;top:407px;width:271px;height:203px;background:#fff;border:1px solid #d3d6de;box-sizing:border-box;"></div><div class="r" style="left:734px;top:408px;width:269px;height:19px;background:#e8eaee;"></div><div class="r" style="left:734px;top:426px;width:269px;height:1px;background:#d3d6de;"></div><div class="t" style="left:738px;top:411.34px;font-size:12px;line-height:14px;font-weight:bold;letter-spacing:-0.15px;"><u>Diagnosen</u></div><svg class="r" style="left:985px;top:410px" width="14" height="14" viewBox="0 0 14 14"><path d="M1 13 L2 10.5 L10.5 2 L12 3.5 L3.5 12 Z" fill="#1e2f5c"/><path d="M10.3 2.2 L11.5 1 L13 2.5 L11.8 3.7 Z" fill="#1e2f5c"/></svg><div class="r" style="left:733px;top:617px;width:271px;height:117px;background:#fff;border:1px solid #d3d6de;box-sizing:border-box;"></div><div class="r" style="left:734px;top:618px;width:269px;height:19px;background:#e8eaee;"></div><div class="r" style="left:734px;top:636px;width:269px;height:1px;background:#d3d6de;"></div><div class="t" style="left:738px;top:620.34px;font-size:12px;line-height:14px;font-weight:bold;letter-spacing:-0.15px;">Bemerkungen</div><div class="r" style="left:274px;top:532px;width:451px;height:22px;background:#fff;border:1px solid #a9aebb;box-sizing:border-box;"></div><div class="r" style="left:496px;top:532px;width:1px;height:21px;background:#a9aebb;"></div><div class="r" style="left:606px;top:532px;width:1px;height:21px;background:#a9aebb;"></div><div class="t" style="left:279px;top:536px;width:217px;overflow:hidden;font-size:12px;line-height:14px;letter-spacing:-0.25px">Dr. med. Gudrun</div><div class="t" style="left:611px;top:536px;width:113px;overflow:hidden;font-size:12px;line-height:14px;letter-spacing:-0.25px">Allgemein</div><div class="r" style="left:274px;top:637px;width:451px;height:64px;background:#fff;border:1px solid #a9aebb;box-sizing:border-box;"></div><div class="r" style="left:274px;top:658px;width:450px;height:1px;background:#a9aebb;"></div><div class="r" style="left:274px;top:679px;width:450px;height:1px;background:#a9aebb;"></div><div class="r" style="left:496px;top:637px;width:1px;height:63px;background:#a9aebb;"></div><div class="r" style="left:606px;top:637px;width:1px;height:63px;background:#a9aebb;"></div><div class="r" style="left:704px;top:637px;width:1px;height:63px;background:#a9aebb;"></div><div class="t" style="left:279px;top:641px;width:217px;overflow:hidden;font-size:12px;line-height:14px;letter-spacing:-0.25px">AOK Baden-Württemberg Krankenkasse Heilbronn</div><div class="t" style="left:501px;top:641px;width:105px;overflow:hidden;font-size:12px;line-height:14px;letter-spacing:-0.25px">07471-1800 49 30</div><div class="t" style="left:611px;top:641px;width:93px;overflow:hidden;font-size:12px;line-height:14px;letter-spacing:-0.25px">Krankenkasse</div><div class="t" style="left:279px;top:662px;width:217px;overflow:hidden;font-size:12px;line-height:14px;letter-spacing:-0.25px">AOK Baden-Württemberg Pflegekasse</div><div class="t" style="left:501px;top:662px;width:105px;overflow:hidden;font-size:12px;line-height:14px;letter-spacing:-0.25px">0721-91582678</div><div class="t" style="left:611px;top:662px;width:93px;overflow:hidden;font-size:12px;line-height:14px;letter-spacing:-0.25px">Pflegekasse</div><div class="t" style="left:279px;top:683px;width:217px;overflow:hidden;font-size:12px;line-height:14px;letter-spacing:-0.25px">Mustermann Max</div><div class="t" style="left:501px;top:683px;width:105px;overflow:hidden;font-size:12px;line-height:14px;letter-spacing:-0.25px">05555 123456</div><div class="t" style="left:611px;top:683px;width:93px;overflow:hidden;font-size:12px;line-height:14px;letter-spacing:-0.25px">Selbstzahler</div>
</body></html>
